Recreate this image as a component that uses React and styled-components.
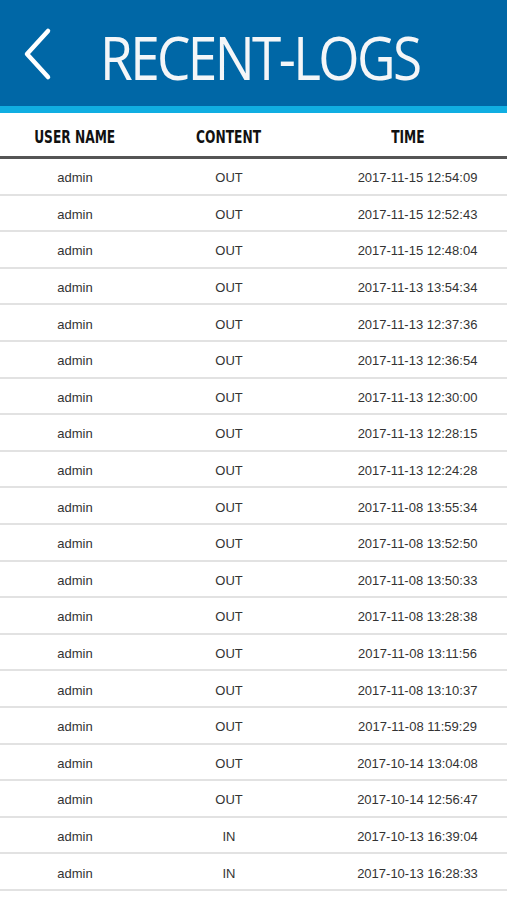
import React from 'react'
import styled, { createGlobalStyle } from 'styled-components'

const logs = [
  ['admin', 'OUT', '2017-11-15 12:54:09'],
  ['admin', 'OUT', '2017-11-15 12:52:43'],
  ['admin', 'OUT', '2017-11-15 12:48:04'],
  ['admin', 'OUT', '2017-11-13 13:54:34'],
  ['admin', 'OUT', '2017-11-13 12:37:36'],
  ['admin', 'OUT', '2017-11-13 12:36:54'],
  ['admin', 'OUT', '2017-11-13 12:30:00'],
  ['admin', 'OUT', '2017-11-13 12:28:15'],
  ['admin', 'OUT', '2017-11-13 12:24:28'],
  ['admin', 'OUT', '2017-11-08 13:55:34'],
  ['admin', 'OUT', '2017-11-08 13:52:50'],
  ['admin', 'OUT', '2017-11-08 13:50:33'],
  ['admin', 'OUT', '2017-11-08 13:28:38'],
  ['admin', 'OUT', '2017-11-08 13:11:56'],
  ['admin', 'OUT', '2017-11-08 13:10:37'],
  ['admin', 'OUT', '2017-11-08 11:59:29'],
  ['admin', 'OUT', '2017-10-14 13:04:08'],
  ['admin', 'OUT', '2017-10-14 12:56:47'],
  ['admin', 'IN', '2017-10-13 16:39:04'],
  ['admin', 'IN', '2017-10-13 16:28:33'],
]

const GlobalStyle = createGlobalStyle`
  body {
    margin: 0;
    background: #fff;
    font-family: 'Liberation Sans', Arial, sans-serif;
  }
`

const App = () => {
  return (
    <Page>
      <GlobalStyle />
      <Header>
        <Back aria-label="back">
          <svg width="30" height="54" viewBox="0 0 30 54">
            <path d="M26 4 L5 27 L26 50" fill="none" stroke="#fff" strokeWidth="4.5" strokeLinecap="round" strokeLinejoin="round" />
          </svg>
        </Back>
        <Title>RECENT-LOGS</Title>
      </Header>
      <Stripe />
      <HeadRow>
        <HeadCell><span>USER NAME</span></HeadCell>
        <HeadCell><span>CONTENT</span></HeadCell>
        <HeadCell><span>TIME</span></HeadCell>
      </HeadRow>
      {logs.map((l, i) => (
        <Row key={i}>
          <Cell>{l[0]}</Cell>
          <Cell>{l[1]}</Cell>
          <Cell $shift={20}>{l[2]}</Cell>
        </Row>
      ))}
    </Page>
  )
}

const Page = styled.div`
  width: 507px;
  min-height: 900px;
  background: #fff;
`

const Header = styled.header`
  height: 106px;
  background: #0067a6;
  display: flex;
  align-items: center;
  padding-left: 22px;
  box-sizing: border-box;
`

const Back = styled.div`
  width: 30px;
  height: 54px;
  margin-top: 2px;
  margin-right: 48px;
  display: flex;
`

const Title = styled.h1`
  margin: 6px 0 0;
  color: #f4f6f8;
  font-family: 'Open Sans', 'Liberation Sans', sans-serif;
  font-weight: 400;
  font-size: 61px;
  letter-spacing: -3px;
  line-height: 1;
  transform: scaleX(0.87);
  transform-origin: left center;
  white-space: nowrap;
`

const Stripe = styled.div`
  height: 7px;
  background: #10aee2;
`

const HeadRow = styled.div`
  display: grid;
  grid-template-columns: 150px 158px 1fr;
  height: 46px;
  align-items: center;
  border-bottom: 3px solid #555;
  box-sizing: border-box;
  padding-top: 5px;
`

const HeadCell = styled.div`
  text-align: center;
  font-family: 'DejaVu Sans Condensed', 'Liberation Sans', sans-serif;
  font-weight: 700;
  font-size: 17px;
  color: #111;
  span {
    display: inline-block;
    transform: scaleX(0.8);
    white-space: nowrap;
  }
`

const Row = styled.div`
  display: grid;
  grid-template-columns: 150px 158px 1fr;
  height: 36.6px;
  align-items: center;
  border-bottom: 2px solid #e2e2e2;
  box-sizing: border-box;
`

const Cell = styled.div`
  text-align: center;
  font-size: 13px;
  color: #333;
  padding-top: 3px;
  padding-left: ${(p) => p.$shift || 0}px;
`

export default App
